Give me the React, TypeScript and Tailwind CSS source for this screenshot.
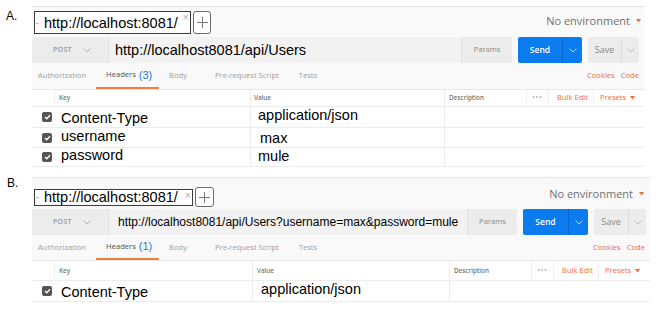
import React from 'react';

const SANS = "font-['Liberation_Sans',Arial,sans-serif]";
const UI = "font-['Open_Sans','Liberation_Sans',sans-serif]";

type Row = { k: string; v: string; h: string; kCls: string; vCls: string };

type Cfg = {
  label: string;
  labelCls: string;
  panelCls: string;
  topCls: string;
  boxCls: string;
  boxTextCls: string;
  plusCls: string;
  envCls: string;
  url: string;
  urlCls: string;
  urlTextCls: string;
  paramsCls: string;
  sendCls: string;
  saveCls: string;
  count: string;
  tabsCls: string;
  headCls: string;
  keyW: string;
  valW: string;
  valPad: string;
  descW: string;
  rows: Row[];
};

const A: Cfg = {
  label: 'A.',
  labelCls: 'pt-[10px] pl-[6px]',
  panelCls: 'mt-[6px] w-[612px]',
  topCls: 'h-[30px]',
  boxCls: 'mt-[4px] h-[23px] w-[157px] pt-[2px]',
  boxTextCls: 'text-[14.5px]',
  plusCls: 'mt-[4px] h-[23px] w-[18px]',
  envCls: 'mt-[8px] pr-[3px]',
  url: 'http://localhost8081/api/Users',
  urlCls: 'w-[353px] pl-[6px]',
  urlTextCls: 'text-[14.5px]',
  paramsCls: 'w-[51px]',
  sendCls: 'w-[64px]',
  saveCls: 'w-[51px]',
  count: '3',
  tabsCls: 'h-[27px]',
  headCls: 'h-[17px]',
  keyW: 'w-[195px]',
  valW: 'w-[194px]',
  valPad: 'pl-[3px]',
  descW: 'w-[82px]',
  rows: [
    { k: 'Content-Type', v: 'application/json', h: 'h-[21px]', kCls: 'pt-[2px]', vCls: 'pl-[7px] pb-[3px]' },
    { k: 'username', v: 'max', h: 'h-[20px]', kCls: 'pb-[3px]', vCls: 'pl-[9px] pt-[1px]' },
    { k: 'password', v: 'mule', h: 'h-[19px]', kCls: 'pb-[4px]', vCls: 'pl-[7px] pb-[2px]' },
  ],
};

const B: Cfg = {
  label: 'B.',
  labelCls: 'pt-[10px] pl-[7px]',
  panelCls: 'mt-[10px] w-[618px]',
  topCls: 'h-[31px]',
  boxCls: 'mt-[11px] h-[17px] w-[159px]',
  boxTextCls: 'text-[14.5px]',
  plusCls: 'mt-[9px] h-[20px] w-[19px]',
  envCls: 'mt-[10px] pr-[6px]',
  url: 'http://localhost8081/api/Users?username=max&password=mule',
  urlCls: 'w-[359px] pl-[9px]',
  urlTextCls: 'text-[12px]',
  paramsCls: 'w-[50px]',
  sendCls: 'w-[65px]',
  saveCls: 'w-[52px]',
  count: '1',
  tabsCls: 'h-[26px]',
  headCls: 'h-[20px]',
  keyW: 'w-[197px]',
  valW: 'w-[197px]',
  valPad: 'pl-[4px]',
  descW: 'w-[82px]',
  rows: [
    { k: 'Content-Type', v: 'application/json', h: 'h-[21px]', kCls: 'pt-[2px]', vCls: 'pl-[8px] pb-[4px]' },
  ],
};

const Chevron = ({ color = '#a8a8a8' }: { color?: string }) => (
  <svg width="8" height="5" viewBox="0 0 8 5" fill="none">
    <path d="M0.5 0.5L4 4L7.5 0.5" stroke={color} strokeWidth="0.9" />
  </svg>
);

const Check = () => (
  <span className="w-[10px] h-[10px] rounded-[2px] bg-[#555] flex items-center justify-center">
    <svg width="7" height="6" viewBox="0 0 7 6" fill="none">
      <path d="M1 3l1.8 1.8L6 1.3" stroke="#fff" strokeWidth="1.3" />
    </svg>
  </span>
);

const Caret = () => (
  <svg className="ml-[4px]" width="5" height="4" viewBox="0 0 5 4">
    <path d="M0 0h5L2.5 3.5z" fill="#f26b3a" />
  </svg>
);

const Panel = ({ c }: { c: Cfg }) => (
  <div className={`flex flex-col bg-[#f9f9f9] border-t border-[#e4e4e4] ${c.panelCls}`}>
    {/* tab strip */}
    <div className={`flex items-start ${c.topCls}`}>
      <div className={`relative ml-[2px] flex items-center bg-white border border-[#3c3c3c] ${c.boxCls}`}>
        <span className="w-[9px] pl-[1px] text-[6px] leading-none text-[#777]">•</span>
        <span className={`${SANS} leading-none text-black ${c.boxTextCls}`}>http://localhost:8081/</span>
        <span className={`absolute right-[1px] top-[0px] ${SANS} text-[11px] leading-none text-[#b0b0b0]`}>×</span>
      </div>
      <div className={`ml-[2px] flex items-center justify-center bg-white border border-[#6a6a6a] rounded-[3px] ${c.plusCls}`}>
        <svg width="11" height="11" viewBox="0 0 11 11">
          <path d="M5.5 0v11M0 5.5h11" stroke="#777" strokeWidth="1" />
        </svg>
      </div>
      <div className={`ml-auto flex items-center ${c.envCls}`}>
        <span className={`${UI} text-[11px] leading-none text-[#707070]`}>No environment</span>
        <span className="ml-[2px]"><Caret /></span>
      </div>
    </div>

    {/* url bar */}
    <div className="flex h-[26px]">
      <div className="w-[76px] bg-[#ececec] flex items-center pl-[21px]">
        <span className={`${UI} font-semibold text-[7px] text-[#9a9a9a] tracking-[0.3px]`}>POST</span>
        <span className="ml-[11px] flex"><Chevron /></span>
      </div>
      <div className={`bg-[#f2f2f2] flex items-center border-l border-[#e2e2e2] ${c.urlCls}`}>
        <span className={`${SANS} leading-none text-black whitespace-nowrap ${c.urlTextCls}`}>{c.url}</span>
      </div>
      <div className={`bg-[#ececec] flex items-center justify-center border-l border-[#e0e0e0] ${UI} text-[7.6px] text-[#8a8a8a] ${c.paramsCls}`}>Params</div>
      <div className={`ml-[6px] flex rounded-[2px] bg-[#0a7cef] ${c.sendCls}`}>
        <div className={`flex-1 flex items-center justify-center ${UI} font-semibold text-[8.5px] text-white`}>Send</div>
        <div className="w-[20px] flex items-center justify-center border-l border-[#0866c6]"><Chevron color="#bcd8f7" /></div>
      </div>
      <div className={`ml-[6px] flex rounded-[2px] bg-[#ececec] ${c.saveCls}`}>
        <div className={`flex-1 flex items-center justify-center ${UI} text-[9px] text-[#8a8a8a]`}>Save</div>
        <div className="w-[18px] flex items-center justify-center border-l border-[#dcdcdc]"><Chevron color="#b5b5b5" /></div>
      </div>
    </div>

    {/* request tabs */}
    <div className={`flex items-stretch border-b border-[#e8e8e8] ${UI} text-[7.6px] text-[#a0a0a0] ${c.tabsCls}`}>
      <span className="ml-[6px] flex items-center">Authorization</span>
      <span className="ml-[10px] w-[63px] pl-[10px] flex items-center border-b-2 border-[#f47d42] text-[#505050]">
        Headers
        <span className={`${SANS} ml-[3px] text-[11px] leading-none text-[#2878d8]`}>({c.count})</span>
      </span>
      <span className="ml-[10px] flex items-center">Body</span>
      <span className="ml-[28px] flex items-center">Pre-request Script</span>
      <span className="ml-[20px] flex items-center">Tests</span>
      <span className="ml-auto flex items-center text-[#f26b3a]">Cookies</span>
      <span className="ml-[6px] mr-[5px] flex items-center text-[#f26b3a]">Code</span>
    </div>

    {/* headers table */}
    <div className={`flex bg-white border-b border-[#ededed] ${UI} text-[6.3px] font-semibold text-[#777] ${c.headCls}`}>
      <div className="w-[23px] border-r border-[#f0f0f0]" />
      <div className={`flex items-center pl-[4px] ${c.keyW}`}>Key</div>
      <div className={`flex items-center border-l border-[#ececec] ${c.valW} ${c.valPad}`}>Value</div>
      <div className={`flex items-center pl-[4px] border-l border-[#ececec] ${c.descW}`}>Description</div>
      <div className="w-[22px] flex items-center justify-center border-l border-[#f0f0f0] text-[#aaa] tracking-[1px]">•••</div>
      <div className="w-[45px] flex items-center pl-[8px] border-l border-[#f0f0f0] text-[#f26b3a] font-normal text-[7.6px]">Bulk Edit</div>
      <div className="flex-1 flex items-center pl-[6px] border-l border-[#f0f0f0] text-[#f26b3a] font-normal text-[7.6px]">
        Presets
        <Caret />
      </div>
    </div>
    {c.rows.map((r) => (
      <div key={r.k} className={`flex bg-white border-b border-[#ececec] ${r.h}`}>
        <div className="w-[23px] flex items-center pl-[10px]"><Check /></div>
        <div className={`flex items-center pl-[6px] ${SANS} text-[14.5px] leading-none text-black ${c.keyW} ${r.kCls}`}>{r.k}</div>
        <div className={`flex items-center border-l border-[#ececec] ${SANS} text-[14.5px] leading-none text-black ${c.valW} ${r.vCls}`}>{r.v}</div>
        <div className="flex-1 border-l border-[#ececec]" />
      </div>
    ))}
  </div>
);

const Section = ({ c }: { c: Cfg }) => (
  <div className="flex">
    <div className={`w-[32px] ${SANS} text-[12px] leading-none text-black ${c.labelCls}`}>{c.label}</div>
    <Panel c={c} />
  </div>
);

export default function App() {
  return (
    <div className="w-[660px] h-[313px] bg-white overflow-hidden flex flex-col">
      <Section c={A} />
      <Section c={B} />
    </div>
  );
}
